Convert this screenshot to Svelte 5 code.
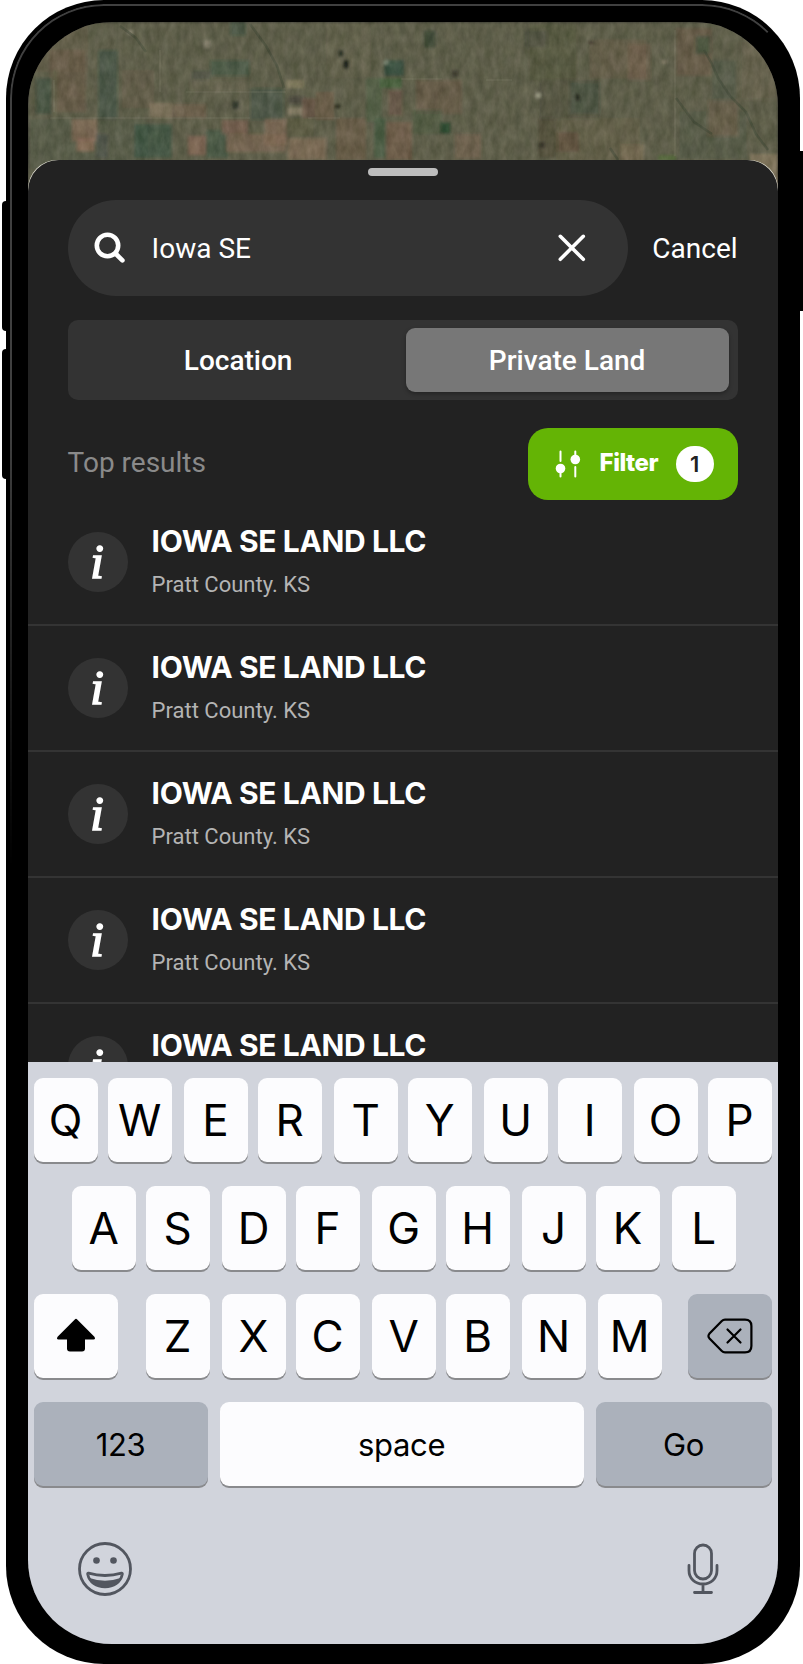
<script lang="ts">
  interface Result {
    id: number;
    owner: string;
    county: string;
  }

  // x, y, width, height, colour
  type Patch = [number, number, number, number, string];

  let query = $state('Iowa SE');
  let tab = $state('Private Land');

  const tabs = ['Location', 'Private Land'];
  const activeFilters = 1;

  const results: Result[] = [1, 2, 3, 4, 5].map(id => ({
    id,
    owner: 'IOWA SE LAND LLC',
    county: 'Pratt County. KS',
  }));

  const topRow = [...'QWERTYUIOP'];
  const homeRow = [...'ASDFGHJKL'];
  const bottomRow = [...'ZXCVBNM'];

  const fields: Patch[] = [
    [28, 22, 60, 50, '#655f4c'],
    [50, 50, 36, 62, '#6b5a49'],
    [36, 78, 16, 36, '#3f5143'],
    [52, 70, 5, 50, '#65644e'],
    [98, 50, 20, 70, '#465548'],
    [28, 118, 120, 52, '#55594a'],
    [72, 119, 25, 22, '#8c6f5c'],
    [77, 138, 17, 13, '#97735f'],
    [96, 134, 12, 24, '#494f49'],
    [122, 70, 32, 38, '#655c4b'],
    [134, 124, 38, 34, '#3a5443'],
    [150, 103, 22, 15, '#8a7a62'],
    [172, 104, 34, 14, '#756351'],
    [188, 136, 18, 19, '#8d6b5b'],
    [206, 130, 22, 28, '#435844'],
    [210, 60, 40, 16, '#48594a'],
    [192, 70, 19, 10, '#50554a'],
    [230, 22, 16, 14, '#445745'],
    [190, 80, 60, 11, '#686550'],
    [222, 120, 26, 14, '#7d5f52'],
    [226, 134, 60, 18, '#7f6753'],
    [250, 88, 34, 32, '#475548'],
    [265, 119, 22, 26, '#866b57'],
    [286, 80, 18, 8, '#8d8466'],
    [288, 96, 17, 8, '#48453c'],
    [288, 108, 17, 7, '#948a70'],
    [302, 98, 14, 20, '#6b5346'],
    [286, 118, 28, 18, '#5c5942'],
    [288, 138, 38, 22, '#88705a'],
    [316, 92, 18, 28, '#705c4a'],
    [326, 22, 45, 56, '#65634d'],
    [336, 118, 30, 42, '#6d5c4a'],
    [366, 78, 16, 44, '#4d6245'],
    [380, 78, 22, 10, '#43643e'],
    [384, 60, 20, 16, '#284a3b'],
    [388, 90, 15, 26, '#695647'],
    [374, 118, 12, 40, '#435a41'],
    [386, 122, 26, 38, '#755c4c'],
    [416, 80, 46, 34, '#695a47'],
    [412, 110, 30, 24, '#4d5a43'],
    [455, 134, 26, 25, '#756350'],
    [528, 22, 50, 60, '#57583f'],
    [525, 30, 22, 18, '#4f5244'],
    [540, 80, 60, 40, '#505240'],
    [538, 118, 20, 40, '#504c3a'],
    [556, 118, 84, 42, '#666249'],
    [557, 132, 22, 20, '#624f3c'],
    [570, 82, 30, 32, '#4c5446'],
    [590, 40, 56, 38, '#675c49'],
    [628, 44, 22, 36, '#736350'],
    [676, 28, 36, 48, '#6a594a'],
    [696, 36, 14, 18, '#42543e'],
    [712, 60, 24, 44, '#535a4b'],
    [740, 40, 38, 60, '#6b6450'],
    [678, 110, 70, 50, '#555a49'],
    [708, 100, 30, 36, '#6c604d'],
    [620, 144, 24, 18, '#7c6d56'],
    [658, 155, 18, 6, '#536d39'],
    [750, 154, 28, 36, '#908064'],
  ];

  const specks: Patch[] = [
    [338, 50, 6, 7, '#202a1f'],
    [343, 60, 6, 9, '#1d241b'],
    [334, 104, 7, 5, '#25271d'],
    [232, 101, 7, 8, '#2e362c'],
    [440, 122, 11, 12, '#27462d'],
    [452, 70, 7, 7, '#38352a'],
    [424, 30, 12, 18, '#3b4735'],
    [539, 142, 6, 6, '#26261d'],
    [575, 94, 5, 7, '#22261f'],
    [536, 93, 5, 5, '#a5a48e'],
    [588, 41, 6, 3, '#3a3327'],
    [662, 60, 5, 4, '#8a806c'],
    [384, 60, 4, 5, '#8b9985'],
    [204, 40, 7, 8, '#8d8774'],
    [128, 30, 5, 5, '#9c9780'],
  ];
</script>

{#snippet key(label: string)}
  <button class="key">{label}</button>
{/snippet}

<div class="stage">
  <span class="side-button volume-up"></span>
  <span class="side-button volume-down"></span>
  <span class="side-button power"></span>

  <div class="phone">
    <div class="screen">
      <svg class="map" viewBox="28 22 750 170" width="750" height="170">
        <defs>
          <filter id="soften" x="0" y="0" width="100%" height="100%">
            <feGaussianBlur stdDeviation="1.7" />
          </filter>
          <filter id="grain" x="0" y="0" width="100%" height="100%" color-interpolation-filters="sRGB">
            <feTurbulence type="fractalNoise" baseFrequency="0.13 0.07" numOctaves="4" seed="8" />
            <feColorMatrix values="0.9 0 0 0 -0.07  0.8 0.1 0 0 -0.07  0.8 0 0.1 0 -0.15  0 0 0 0 1" />
          </filter>
        </defs>
        <g filter="url(#soften)">
          <rect x="28" y="22" width="750" height="170" fill="#5f5f4b" />
          {#each fields as [x, y, width, height, fill]}
            <rect {x} {y} {width} {height} {fill} opacity="0.75" />
          {/each}
          {#each specks as [x, y, width, height, fill]}
            <rect {x} {y} {width} {height} {fill} rx="2" />
          {/each}
        </g>
        <g class="tracks">
          <path d="M50 118H250M308 118H340" />
          <path d="M160 50V92M54 80V112M186 92H286M401 79H442M486 80H512M675 30V156" />
        </g>
        <g class="creeks">
          <path d="M250 24L266 46L277 66L284 88M120 26L136 38L146 52M676 98L694 122L712 134" />
          <path d="M704 50L712 64L718 78L730 96L746 112L756 134L768 150M610 148L618 160" />
        </g>
        <rect class="grain" x="28" y="22" width="750" height="170" filter="url(#grain)" />
      </svg>

      <div class="sheet">
        <div class="sheet-body">
          <div class="handle"></div>

          <div class="search-row">
            <div class="search-box">
              <svg class="search-icon" width="32" height="32" viewBox="0 0 32 32">
                <circle cx="13.5" cy="13.5" r="10.7" />
                <path d="M21.5 21.5L28.4 28.4" />
              </svg>
              <input type="text" bind:value={query} />
              <svg class="clear-icon" width="28" height="28" viewBox="0 0 28 28">
                <path d="M2.3 2.3L25.3 25.3M25.3 2.3L2.3 25.3" />
              </svg>
            </div>
            <button class="cancel">Cancel</button>
          </div>

          <div class="tabs">
            {#each tabs as name}
              <button class="tab" class:active={tab === name} onclick={() => (tab = name)}>
                {name}
              </button>
            {/each}
          </div>

          <div class="results-head">
            <span class="results-title">Top results</span>
            <button class="filter">
              <svg width="26" height="28" viewBox="0 0 26 28">
                <path d="M5.5 1.5V11M5.5 22V26.5M20.3 1.5V6M20.3 17V26.5" />
                <circle cx="5.5" cy="18.5" r="4.8" />
                <circle cx="20.3" cy="9.5" r="4.8" />
              </svg>
              <span class="filter-label">Filter</span>
              <span class="filter-count">{activeFilters}</span>
            </button>
          </div>

          <div class="results">
            {#each results as r (r.id)}
              <div class="result">
                <span class="info">i</span>
                <div class="result-text">
                  <div class="owner">{r.owner}</div>
                  <div class="county">{r.county}</div>
                </div>
              </div>
            {/each}
          </div>
        </div>
      </div>

      <div class="keyboard">
        <div class="key-row">
          {#each topRow as letter}{@render key(letter)}{/each}
        </div>
        <div class="key-row home">
          {#each homeRow as letter}{@render key(letter)}{/each}
        </div>
        <div class="key-row bottom">
          <button class="key shift" aria-label="Shift">
            <svg width="40" height="34" viewBox="0 0 40 34">
              <path d="M18.8 1.4Q20 .2 21.2 1.4L38.4 18.8Q40 21.5 37.5 21.5H29V30.5Q29 33.5 26 33.5H14Q11 33.5 11 30.5V21.5H2.5Q0 21.5 1.6 18.8Z" />
            </svg>
          </button>
          {#each bottomRow as letter}{@render key(letter)}{/each}
          <button class="key dark backspace" aria-label="Delete">
            <svg width="46" height="36" viewBox="0 0 46 36">
              <path d="M18 1.6H38Q44.4 1.6 44.4 8V28Q44.4 34.4 38 34.4H18Q16.2 34.4 14.8 33L2.3 20.2Q.6 18 2.3 15.8L14.8 3Q16.2 1.6 18 1.6Z" />
              <path d="M20.5 11.5L33.5 24.5M33.5 11.5L20.5 24.5" />
            </svg>
          </button>
        </div>
        <div class="key-row words">
          <button class="key dark numbers">123</button>
          <button class="key space">space</button>
          <button class="key dark go">Go</button>
        </div>
        <div class="key-footer">
          <svg class="emoji" width="54" height="54" viewBox="0 0 54 54">
            <circle class="line" cx="27" cy="27" r="25.5" />
            <circle cx="18.5" cy="18.5" r="3.3" />
            <circle cx="35.5" cy="18.5" r="3.3" />
            <path class="line" d="M10.5 31.2Q27 35.8 43.5 31.2Q44.5 31 44.3 32.2C42.5 40.5 35.5 44.8 27 44.8S11.5 40.5 9.7 32.2Q9.5 31 10.5 31.2Z" />
            <path d="M11.5 36Q27 41.5 42.5 36C39.5 42.5 33.5 45 27 45S14.5 42.5 11.5 36Z" />
          </svg>
          <svg class="mic" width="32" height="52" viewBox="0 0 32 52">
            <rect x="7.5" y="2" width="17" height="34" rx="8.5" />
            <path d="M2 22.5V27.5C2 35.5 8 41 16 41S30 35.5 30 27.5V22.5M16 41V49M7.5 49.5H24.5" />
          </svg>
        </div>
      </div>
    </div>
  </div>
</div>

<style>
  :global(body) {
    background: #fff;
  }

  .stage {
    position: relative;
    width: 803px;
    height: 1664px;
    overflow: hidden;
    font-family: Roboto, sans-serif;
    color: #fff;
  }

  button {
    margin: 0;
    padding: 0;
    border: none;
    background: none;
    color: inherit;
    font: inherit;
  }

  .side-button {
    position: absolute;
    width: 8px;
    height: 130px;
    border-radius: 4px;
    background: #000;
  }

  .volume-up {
    left: 2px;
    top: 201px;
  }

  .volume-down {
    left: 2px;
    top: 349px;
  }

  .power {
    left: 795px;
    top: 151px;
    width: 12px;
    height: 160px;
  }

  .phone {
    position: relative;
    box-sizing: border-box;
    width: 794px;
    height: 1664px;
    margin-left: 5.6px;
    padding: 22px 22px 20px;
    border-radius: 98px;
    background: #000;
  }

  /* metal edge catching the light */
  .phone::before {
    content: '';
    position: absolute;
    inset: 4px 4px auto;
    height: 860px;
    border: 2px solid #404040;
    border-right-color: transparent;
    border-bottom: none;
    border-radius: 94px 94px 0 0;
    mask-image: linear-gradient(#000 50%, transparent);
    pointer-events: none;
  }

  .screen {
    position: relative;
    display: flex;
    flex-direction: column;
    height: 1622px;
    border-radius: 84px;
    overflow: hidden;
    background: #222;
  }

  .map {
    display: block;
    flex: none;
    margin-bottom: -32px;
  }

  .tracks {
    fill: none;
    stroke: #8a8874;
    stroke-width: 1.2;
    opacity: 0.4;
  }

  .creeks {
    fill: none;
    stroke: #37412f;
    stroke-width: 2.5;
    opacity: 0.45;
  }

  .grain {
    opacity: 0.16;
  }

  .sheet {
    position: relative;
    flex: none;
    height: 902px;
    border-radius: 29px 29px 0 0;
    background: #e4e2d6;
    overflow: hidden;
  }

  .sheet-body {
    box-sizing: border-box;
    height: 902px;
    padding: 8px 40px 0;
    border-radius: 31px 31px 0 0;
    background: #222;
    overflow: hidden;
  }

  .handle {
    width: 70px;
    height: 8px;
    margin: 0 auto;
    border-radius: 4px;
    background: #bdbdbd;
  }

  .search-row {
    display: flex;
    align-items: center;
    justify-content: space-between;
    margin-top: 24px;
  }

  .search-box {
    display: flex;
    align-items: center;
    box-sizing: border-box;
    width: 560px;
    height: 96px;
    padding: 0 42px 0 26px;
    border-radius: 48px;
    background: #333;
  }

  .search-icon {
    fill: none;
    stroke: #fff;
    stroke-width: 4.6;
    stroke-linecap: round;
  }

  .search-box input {
    flex: 1;
    min-width: 0;
    margin-left: 26px;
    padding: 0;
    border: none;
    outline: none;
    background: none;
    color: #fff;
    font: 400 28px Roboto, sans-serif;
  }

  .clear-icon {
    fill: none;
    stroke: #fff;
    stroke-width: 3.6;
    stroke-linecap: round;
  }

  .cancel {
    font-size: 28px;
  }

  .tabs {
    display: flex;
    gap: 6px;
    box-sizing: border-box;
    height: 80px;
    margin-top: 24px;
    padding: 8px 9px 8px 9px;
    border-radius: 10px;
    background: #333;
  }

  .tab {
    flex: 1;
    border-radius: 9px;
    font-size: 28px;
    font-weight: 500;
  }

  .tab.active {
    background: #777;
    box-shadow: 0 2px 4px rgba(0, 0, 0, 0.3);
  }

  .results-head {
    display: flex;
    align-items: center;
    justify-content: space-between;
    height: 72px;
    margin-top: 28px;
  }

  .results-title {
    margin-top: -3px;
    color: #8a8a8a;
    font-size: 28px;
  }

  .filter {
    display: flex;
    align-items: center;
    box-sizing: border-box;
    width: 210px;
    height: 72px;
    padding: 0 24px 0 27px;
    border-radius: 20px;
    background: #64b405;
    font-family: Inter, sans-serif;
  }

  .filter svg {
    fill: #fff;
    stroke: #fff;
    stroke-width: 2;
    stroke-linecap: round;
  }

  .filter circle {
    stroke: none;
  }

  .filter-label {
    margin: -4px auto 0 19px;
    font-size: 24px;
    font-weight: 800;
    letter-spacing: -0.5px;
  }

  .filter-count {
    width: 38px;
    border-radius: 19px;
    background: #fff;
    color: #222;
    font-size: 22px;
    font-weight: 600;
    line-height: 36px;
    text-align: center;
  }

  .results {
    margin: 0 -40px;
  }

  .result {
    display: flex;
    box-sizing: border-box;
    height: 126px;
    padding: 32px 40px 0;
    border-bottom: 2px solid #343434;
  }

  .info {
    width: 60px;
    height: 60px;
    border-radius: 50%;
    background: #333;
    font: italic 400 49px/60px 'Liberation Serif', serif;
    -webkit-text-stroke: 1.6px #fff;
    text-align: center;
    text-indent: -1px;
  }

  .result-text {
    margin: -9px 0 0 24px;
  }

  .owner {
    font: 700 30px/36px Inter, sans-serif;
    letter-spacing: -0.38px;
  }

  .county {
    margin-top: 13px;
    color: #b4b4b4;
    font-size: 22px;
    line-height: 26px;
  }

  .keyboard {
    position: relative;
    display: flex;
    flex-direction: column;
    gap: 24px;
    box-sizing: border-box;
    height: 582px;
    padding: 16px 6px 0;
    background: #d1d4dc;
    color: #000;
    font-family: Inter, sans-serif;
  }

  .key-row {
    display: flex;
  }

  .home {
    padding-left: 38px;
  }

  .key {
    display: flex;
    align-items: center;
    justify-content: center;
    flex: none;
    width: 64px;
    height: 84px;
    border-radius: 9px;
    background: #fcfcfe;
    box-shadow: 0 2px 0 #898a8d;
    font-size: 44px;
  }

  .key:nth-child(even) {
    margin-left: 10px;
  }

  .key:nth-child(odd) {
    margin-left: 12px;
  }

  .key:first-child {
    margin-left: 0;
  }

  .bottom .key:nth-child(2) {
    margin-left: 28px;
  }

  .bottom .key:nth-child(8) {
    margin-left: 12px;
  }

  .bottom .backspace {
    margin-left: 26px;
  }

  .dark {
    background: #abb1bb;
  }

  .shift,
  .backspace {
    width: 84px;
  }

  .shift svg {
    margin-top: -3px;
  }

  .backspace svg {
    fill: none;
    stroke: #000;
    stroke-width: 2.2;
    stroke-linecap: round;
  }

  .words .key {
    font-size: 31px;
    letter-spacing: -0.3px;
  }

  .words .numbers {
    width: 174px;
  }

  .words .space {
    width: 364px;
    margin-left: 12px;
  }

  .words .go {
    width: 176px;
  }

  .key-footer {
    display: flex;
    justify-content: space-between;
    align-items: center;
    height: 54px;
    margin-top: 32px;
    padding: 0 53px 0 44px;
    fill: #52565f;
  }

  .line,
  .mic {
    fill: none;
    stroke: #52565f;
    stroke-width: 2.8;
    stroke-linecap: round;
  }
</style>
